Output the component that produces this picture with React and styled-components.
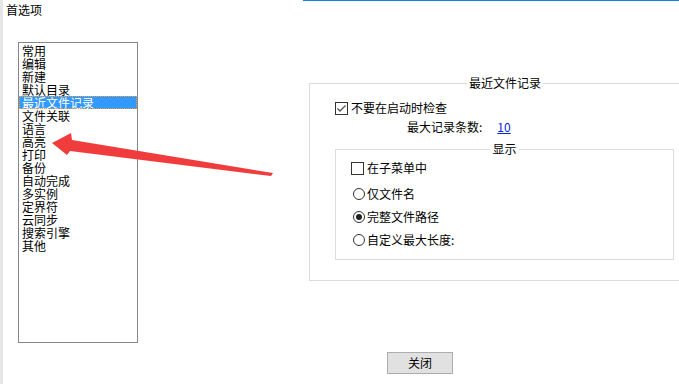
import React from "react";
import styled, { createGlobalStyle } from "styled-components";

const Global = createGlobalStyle`
  html, body { margin: 0; padding: 0; background: #fff; overflow: hidden; }
  * { box-sizing: border-box; }
`;

const Window = styled.div`
  position: relative;
  width: 679px;
  height: 384px;
  overflow: hidden;
  background: #fff;
  display: flex;
  flex-direction: column;
  font-family: "Noto Sans CJK SC", "Noto Sans", sans-serif;
  font-size: 12px;
  color: #000;
  border-left: 3px solid #e6e6e6;
`;

const TopLine = styled.div`
  position: absolute;
  top: 0;
  left: 300px;
  right: 0;
  height: 1px;
  background: #1883d7;
`;

const Title = styled.div`
  height: 18px;
  padding: 3px 0 0 3px;
  line-height: 14px;
`;

const Body = styled.div`
  display: flex;
  align-items: flex-start;
  margin-top: 24px;
`;

const ListBox = styled.ul`
  list-style: none;
  flex: none;
  margin: 0 0 0 15px;
  padding: 1px 0 0 0;
  width: 120px;
  height: 301px;
  border: 1px solid #828790;
`;

const Item = styled.li`
  height: 13px;
  line-height: 13px;
  padding-left: 3px;
  white-space: nowrap;
  background: ${(p) => (p.$active ? "#3399ff" : "transparent")};
  color: ${(p) => (p.$active ? "#fff" : "#000")};
  outline: ${(p) => (p.$active ? "1px dotted #f0a040" : "none")};
  outline-offset: -1px;
`;

const Group = styled.fieldset`
  flex: none;
  margin: ${(p) => p.$margin || "0"};
  padding: 0 0 ${(p) => p.$pb || 0}px 0;
  width: ${(p) => p.$width}px;
  border: 1px solid #dcdcdc;
  min-width: 0;
`;

const Legend = styled.legend`
  margin: 0 auto;
  padding: 0 2px;
  line-height: 14px;
  height: 14px;
`;

const GroupContent = styled.div`
  padding-left: ${(p) => p.$pl}px;
`;

const Row = styled.div`
  display: flex;
  align-items: center;
  height: 14px;
  line-height: 14px;
  margin-top: ${(p) => p.$mt || 0}px;
  padding-left: ${(p) => p.$pl || 0}px;
  gap: ${(p) => (p.$gap != null ? p.$gap : 3)}px;
  white-space: nowrap;
`;

const Box = styled.span`
  display: inline-flex;
  width: 13px;
  height: 13px;
  border: 1px solid #333;
  background: #fff;
  align-items: center;
  justify-content: center;
  flex: none;
`;

const Radio = styled.span`
  display: inline-flex;
  width: 12px;
  height: 12px;
  border: 1px solid #333;
  border-radius: 50%;
  background: #fff;
  align-items: center;
  justify-content: center;
  flex: none;
  &::after {
    content: "";
    width: 6px;
    height: 6px;
    border-radius: 50%;
    background: ${(p) => (p.$on ? "#222" : "transparent")};
  }
`;

const Link = styled.span`
  color: #0026d9;
  text-decoration: underline;
`;

const Footer = styled.div`
  display: flex;
  padding-left: 384px;
  margin-top: 9px;
`;

const Button = styled.button`
  width: 66px;
  height: 22px;
  padding: 0;
  border: 1px solid #adadad;
  background: #e1e1e1;
  font-family: inherit;
  font-size: 12px;
  color: #000;
  line-height: 20px;
`;

const Arrow = styled.svg`
  position: absolute;
  left: -3px;
  top: 0;
  pointer-events: none;
`;

const items = [
  "常用", "编辑", "新建", "默认目录", "最近文件记录", "文件关联", "语言", "高亮",
  "打印", "备份", "自动完成", "多实例", "定界符", "云同步", "搜索引擎", "其他",
];

function Check({ checked }) {
  return (
    <Box>
      {checked && (
        <svg width="11" height="11" viewBox="0 0 11 11">
          <path d="M1.5 5.5 L4 8 L9.5 2.5" fill="none" stroke="#555" strokeWidth="1.4" />
        </svg>
      )}
    </Box>
  );
}

export default function App() {
  return (
    <>
      <Global />
      <Window>
        <TopLine />
        <Title>首选项</Title>
        <Body>
          <ListBox>
            {items.map((t) => (
              <Item key={t} $active={t === "最近文件记录"}>{t}</Item>
            ))}
          </ListBox>
          <Group $width={392} $margin="34px 0 0 171px" $pb={20}>
            <Legend>最近文件记录</Legend>
            <GroupContent $pl={25}>
              <Row $mt={11}>
                <Check checked />
                <span>不要在启动时检查</span>
              </Row>
              <Row $mt={5} $pl={72} $gap={15}>
                <span>最大记录条数:</span>
                <Link>10</Link>
              </Row>
              <Group $width={339} $margin="8px 0 0 0" $pb={12}>
                <Legend>显示</Legend>
                <GroupContent $pl={15}>
                  <Row $mt={5}>
                    <Check />
                    <span>在子菜单中</span>
                  </Row>
                  <Row $mt={12} $pl={2} $gap={2}>
                    <Radio />
                    <span>仅文件名</span>
                  </Row>
                  <Row $mt={9} $pl={2} $gap={2}>
                    <Radio $on />
                    <span>完整文件路径</span>
                  </Row>
                  <Row $mt={9} $pl={2} $gap={2}>
                    <Radio />
                    <span>自定义最大长度:</span>
                  </Row>
                </GroupContent>
              </Group>
            </GroupContent>
          </Group>
        </Body>
        <Footer>
          <Button>关闭</Button>
        </Footer>
        <Arrow width="679" height="384" viewBox="0 0 679 384">
          <polygon
            points="52,143 71,133 72,140 273,173 271,176 70,151 67,155"
            fill="#f03c3c"
          />
        </Arrow>
      </Window>
    </>
  );
}
